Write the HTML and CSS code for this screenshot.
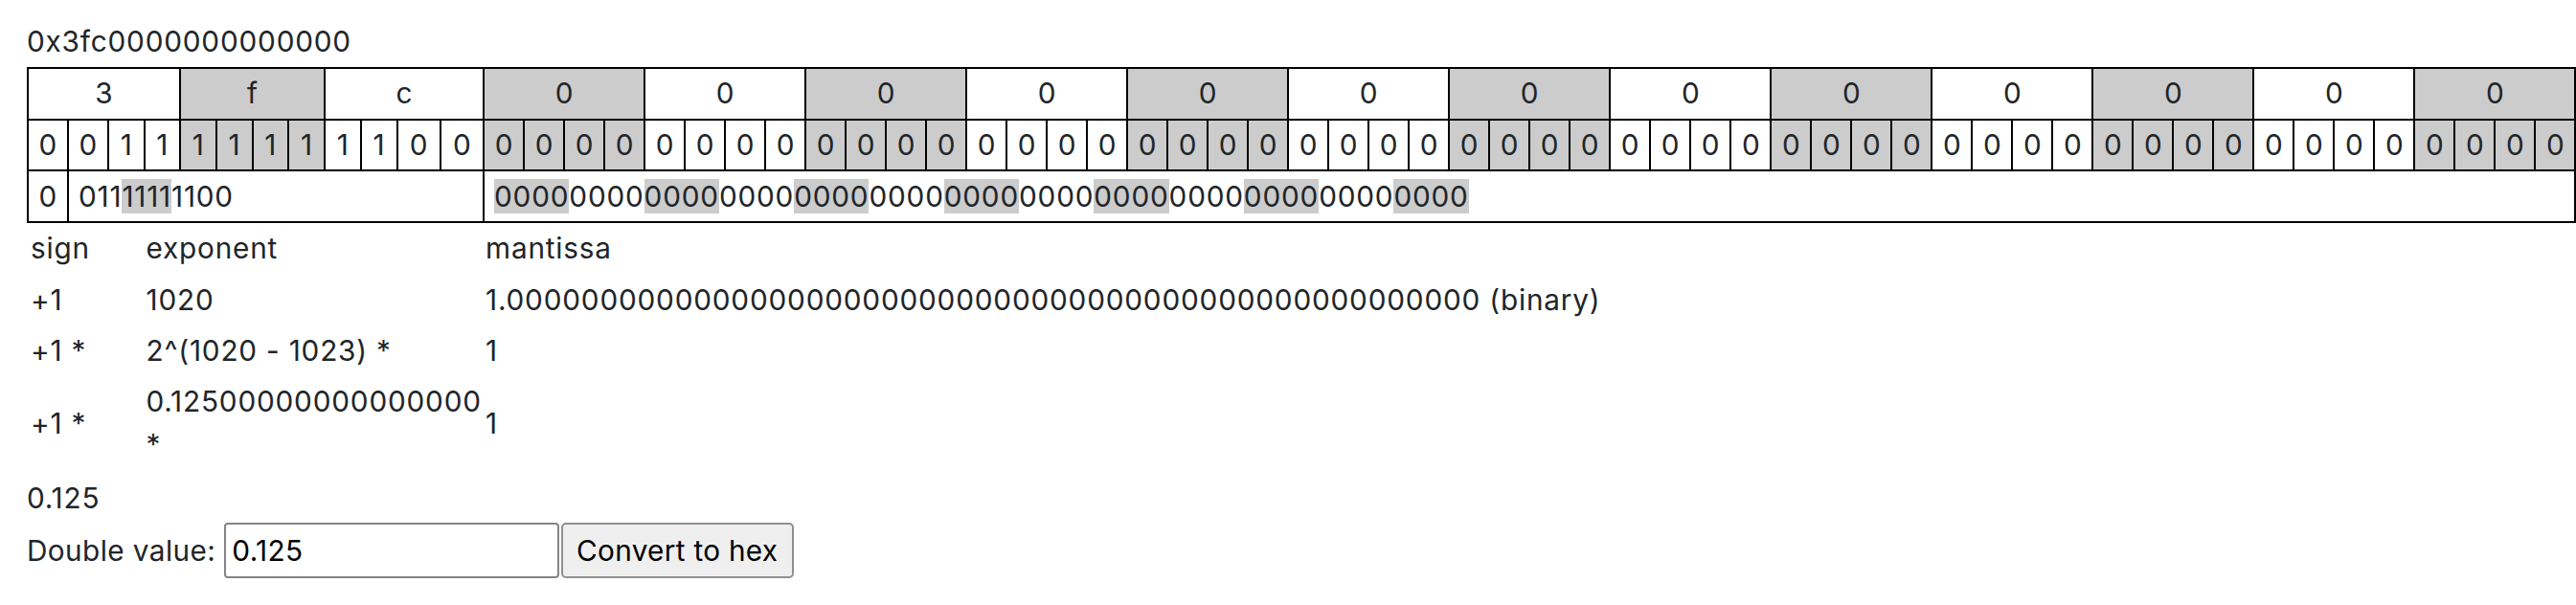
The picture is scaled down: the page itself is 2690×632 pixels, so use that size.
FILE: index.html
```html
<!DOCTYPE html>
<html>
<head>
<meta charset="utf-8">
<link rel="stylesheet" href="styles.css">
</head>
<body>
<div class="hex">0x3fc0000000000000</div>
<table class="bits">
  <colgroup>
    <col span="2" class="w42">
    <col span="2" class="w375">
    <col span="6" class="w3775">
    <col span="2" class="w4525">
    <col span="52" class="w42">
  </colgroup>
  <tbody class="grid">
    <tr class="nib">
      <td colspan="4">3</td><td colspan="4" class="g">f</td><td colspan="4">c</td><td colspan="4" class="g">0</td>
      <td colspan="4">0</td><td colspan="4" class="g">0</td><td colspan="4">0</td><td colspan="4" class="g">0</td>
      <td colspan="4">0</td><td colspan="4" class="g">0</td><td colspan="4">0</td><td colspan="4" class="g">0</td>
      <td colspan="4">0</td><td colspan="4" class="g">0</td><td colspan="4">0</td><td colspan="4" class="g">0</td>
    </tr>
    <tr class="bit">
      <td>0</td><td>0</td><td>1</td><td>1</td>
      <td class="g">1</td><td class="g">1</td><td class="g">1</td><td class="g">1</td>
      <td>1</td><td>1</td><td>0</td><td>0</td>
      <td class="g">0</td><td class="g">0</td><td class="g">0</td><td class="g">0</td>
      <td>0</td><td>0</td><td>0</td><td>0</td>
      <td class="g">0</td><td class="g">0</td><td class="g">0</td><td class="g">0</td>
      <td>0</td><td>0</td><td>0</td><td>0</td>
      <td class="g">0</td><td class="g">0</td><td class="g">0</td><td class="g">0</td>
      <td>0</td><td>0</td><td>0</td><td>0</td>
      <td class="g">0</td><td class="g">0</td><td class="g">0</td><td class="g">0</td>
      <td>0</td><td>0</td><td>0</td><td>0</td>
      <td class="g">0</td><td class="g">0</td><td class="g">0</td><td class="g">0</td>
      <td>0</td><td>0</td><td>0</td><td>0</td>
      <td class="g">0</td><td class="g">0</td><td class="g">0</td><td class="g">0</td>
      <td>0</td><td>0</td><td>0</td><td>0</td>
      <td class="g">0</td><td class="g">0</td><td class="g">0</td><td class="g">0</td>
    </tr>
    <tr class="fields">
      <td class="sgn">0</td>
      <td colspan="11">011<span class="hl">1111</span>1100</td>
      <td colspan="52"><span class="hl">0000</span>0000<span class="hl">0000</span>0000<span class="hl">0000</span>0000<span class="hl">0000</span>0000<span class="hl">0000</span>0000<span class="hl">0000</span>0000<span class="hl">0000</span></td>
    </tr>
  </tbody>
  <tbody class="calc">
    <tr>
      <td colspan="3" class="s">sign</td><td colspan="9">exponent</td><td colspan="52">mantissa</td>
    </tr>
    <tr>
      <td colspan="3" class="s">+1</td><td colspan="9">1020</td><td colspan="52">1.0000000000000000000000000000000000000000000000000000 (binary)</td>
    </tr>
    <tr>
      <td colspan="3" class="s">+1 *</td><td colspan="9">2^(1020 - 1023) *</td><td colspan="52">1</td>
    </tr>
    <tr>
      <td colspan="3" class="s">+1 *</td><td colspan="9">0.12500000000000000 *</td><td colspan="52">1</td>
    </tr>
  </tbody>
</table>
<div class="result">0.125</div>
<div class="form">
  <label class="lbl" for="dv">Double value:</label>
  <input id="dv" class="inp" type="text" value="0.125">
  <button class="btn" type="button">Convert to hex</button>
</div>
</body>
</html>
```
FILE: styles.css
```css
html, body {
  margin: 0;
  background: #ffffff;
}
body {
  padding: 21px 0 0 28px;
  font-family: Inter, "Noto Sans", sans-serif;
  font-size: 29.75px;
  line-height: 1.5;
  letter-spacing: 0.8px;
  color: #212529;
}
.hex {
  line-height: 44.6px;
}
.bits {
  margin-top: 4.4px;
  border-collapse: collapse;
  table-layout: fixed;
  width: 2660px;
}
.w42 { width: 42px; }
.w375 { width: 37.5px; }
.w3775 { width: 37.75px; }
.w4525 { width: 45.25px; }

.grid td {
  border: 2px solid #000;
  padding: 3.5px 0;
  line-height: 44.6px;
  text-align: center;
  white-space: nowrap;
  overflow: hidden;
}
.nib td,
.bit td {
  letter-spacing: 0;
}
.grid td.g {
  background: #cccccc;
}
.fields td {
  text-align: left;
  padding-left: 10px;
}
.fields td.sgn {
  text-align: center;
  padding-left: 0;
  letter-spacing: 0;
}
.hl {
  background: #cccccc;
}
.calc td {
  border: 0;
  padding: 4.4px 2px;
  line-height: 44.6px;
  vertical-align: middle;
  text-align: left;
}
.calc td.s {
  padding-left: 3px;
}
.result {
  margin-top: 7px;
  line-height: 44.6px;
}
.form {
  display: flex;
  align-items: center;
  margin-top: 3.6px;
}
.lbl {
  margin-right: 9px;
  letter-spacing: 0.4px;
}
.inp {
  box-sizing: border-box;
  width: 350px;
  height: 58px;
  margin: 0;
  padding: 0 6px;
  border: 2px solid #858585;
  border-radius: 4px;
  font-family: Inter, "Noto Sans", sans-serif;
  font-size: 29.75px;
  letter-spacing: 0.4px;
  color: #000;
  background: #fff;
}
.btn {
  box-sizing: border-box;
  width: 243px;
  height: 58px;
  margin: 0 0 0 1.5px;
  padding: 0;
  border: 2px solid #8f8f8f;
  border-radius: 5px;
  background: #efefef;
  font-family: Inter, "Noto Sans", sans-serif;
  font-size: 29.75px;
  letter-spacing: 0.3px;
  color: #000;
}
```
